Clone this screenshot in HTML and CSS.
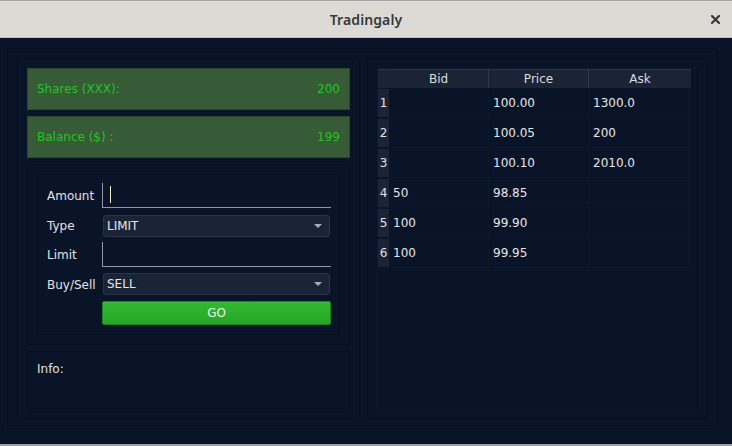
FILE: index.html
```html
<!DOCTYPE html>
<html>
<head>
<meta charset="utf-8">
<title>Tradingaly</title>
<link rel="stylesheet" href="styles.css">
</head>
<body>
<div class="window">
  <header class="titlebar">
    <span class="title">Tradingaly</span>
    <span class="close">
      <svg width="9" height="9" viewBox="0 0 9 9"><path d="M1 1 L8 8 M8 1 L1 8" stroke="#2e3436" stroke-width="2" stroke-linecap="square"/></svg>
    </span>
  </header>
  <main class="main">
    <div class="outer">
      <section class="panel left">
        <div class="stat"><span>Shares (XXX):</span><span>200</span></div>
        <div class="stat"><span>Balance ($) :</span><span>199</span></div>
        <div class="formbox">
          <div class="form">
            <label class="lbl">Amount</label>
            <div class="input"><span class="caret"></span></div>
            <label class="lbl">Type</label>
            <div class="combo"><span>LIMIT</span><span class="arrow"></span></div>
            <label class="lbl">Limit</label>
            <div class="input"></div>
            <label class="lbl">Buy/Sell</label>
            <div class="combo"><span>SELL</span><span class="arrow"></span></div>
            <span></span>
            <button class="go">GO</button>
          </div>
        </div>
        <div class="info">Info:</div>
      </section>
      <section class="panel right">
        <div class="tablebox">
          <div class="grid">
            <div class="hd corner"></div>
            <div class="hd">Bid</div>
            <div class="hd">Price</div>
            <div class="hd">Ask</div>

            <div class="rh">1</div><div class="c"></div><div class="c">100.00</div><div class="c">1300.0</div>
            <div class="rh">2</div><div class="c"></div><div class="c">100.05</div><div class="c">200</div>
            <div class="rh">3</div><div class="c"></div><div class="c">100.10</div><div class="c">2010.0</div>
            <div class="rh">4</div><div class="c">50</div><div class="c">98.85</div><div class="c"></div>
            <div class="rh">5</div><div class="c">100</div><div class="c">99.90</div><div class="c"></div>
            <div class="rh">6</div><div class="c">100</div><div class="c">99.95</div><div class="c"></div>
          </div>
        </div>
      </section>
    </div>
  </main>
  <div class="bottomstrip"></div>
</div>
</body>
</html>
```

FILE: styles.css
```css
* { box-sizing: border-box; }
html, body {
  margin: 0;
  padding: 0;
  width: 732px;
  height: 446px;
  overflow: hidden;
  background: #0a1428;
  font-family: "DejaVu Sans", sans-serif;
  font-size: 12px;
}
.window {
  display: flex;
  flex-direction: column;
  width: 732px;
  height: 446px;
}
.titlebar {
  position: relative;
  height: 38px;
  flex: none;
  background: #dddad6;
  border-top: 1px solid #a3a3a3;
  border-bottom: 1px solid #c4c1bd;
  display: flex;
  align-items: center;
  justify-content: center;
}
.title {
  font-family: "Noto Sans", sans-serif;
  font-weight: 600;
  font-size: 14px;
  color: #33393b;
  letter-spacing: 0.1px;
}
.close {
  position: absolute;
  left: 711px;
  top: 14px;
  width: 9px;
  height: 9px;
  display: flex;
}
.main {
  flex: none;
  height: 406px;
  padding: 10px 14px 15px 7px;
}
.outer {
  width: 711px;
  height: 381px;
  border: 1px solid #060f20;
  padding: 9px;
  display: flex;
  gap: 7px;
}
.panel {
  border: 1px solid #060f20;
  padding: 9px;
  height: 361px;
}
.left {
  width: 343px;
  display: flex;
  flex-direction: column;
  gap: 6px;
}
.right {
  width: 341px;
}
.stat {
  height: 42px;
  background: #375a37;
  border: 1px solid #2a472c;
  display: flex;
  align-items: center;
  justify-content: space-between;
  padding: 0 9px;
  color: #22c522;
  font-size: 12px;
}
.formbox {
  height: 181px;
  border: 1px solid #060f20;
  padding: 9px;
}
.form {
  height: 161px;
  border: 1px solid #060f20;
  padding: 8px 8px 8px 9px;
  display: grid;
  grid-template-columns: 55px 1fr;
  grid-template-rows: 25px 22px 25px 22px 24px;
  row-gap: 6px;
  align-items: center;
}
.form > :nth-child(3), .form > :nth-child(4) { margin-top: 1px; }
.lbl {
  color: #e2e2e2;
  font-size: 12px;
  padding-top: 1px;
}
.input {
  height: 25px;
  border-left: 1px solid #8e98aa;
  border-bottom: 1px solid #8e98aa;
  position: relative;
  align-self: stretch;
}
.caret {
  position: absolute;
  left: 7px;
  top: 3px;
  width: 1px;
  height: 17px;
  background: #f2e8cc;
}
.combo {
  height: 22px;
  margin: 0 1px;
  background: #1b2437;
  border: 1px solid #2b3447;
  border-radius: 3px;
  display: flex;
  align-items: center;
  justify-content: space-between;
  padding: 0 7px 0 3px;
  color: #e6e6e6;
  font-size: 12px;
}
.arrow {
  width: 0;
  height: 0;
  border-left: 4px solid transparent;
  border-right: 4px solid transparent;
  border-top: 4px solid #a4adbb;
}
.go {
  height: 24px;
  width: 100%;
  margin: 0;
  background: linear-gradient(#33b933, #27a527);
  border: 1px solid #1c861c;
  border-radius: 2px;
  color: #e9f2e9;
  font-family: "DejaVu Sans", sans-serif;
  font-size: 12px;
  padding: 0;
}
.info {
  height: 58px;
  border: 1px solid #060f20;
  padding: 10px 9px;
  color: #e2e2e2;
  font-size: 12px;
  line-height: 14px;
}
.tablebox {
  height: 341px;
  border: 1px solid #0d182c;
  border-right-color: #060f20;
  padding-right: 6px;
}
.grid {
  display: grid;
  grid-template-columns: 11px 100px 100px 101px;
  grid-template-rows: 19px repeat(6, 30px);
  width: 312px;
}
.hd {
  background: #1b2436;
  border-top: 1px solid #2a3448;
  border-right: 1px solid #2e384c;
  color: #dcdcdc;
  font-size: 12px;
  display: flex;
  align-items: center;
  justify-content: center;
}
.hd:nth-child(4) { border-right: none; width: 102px; }
.corner { border-right: 1px solid #1b2436; }
.rh {
  background: #1b2436;
  border-bottom: 1px solid #0a1428;
  border-top: 1px solid #0a1428;
  color: #e2e2e2;
  display: flex;
  align-items: center;
  justify-content: center;
  font-size: 12px;
}
.c {
  border-right: 1px solid #0d1829;
  border-bottom: 1px solid #0d1829;
  color: #e6e6e6;
  display: flex;
  align-items: center;
  padding-left: 4px;
  font-size: 12px;
}
.bottomstrip {
  flex: none;
  height: 2px;
  background: #9aa0a6;
}
```
